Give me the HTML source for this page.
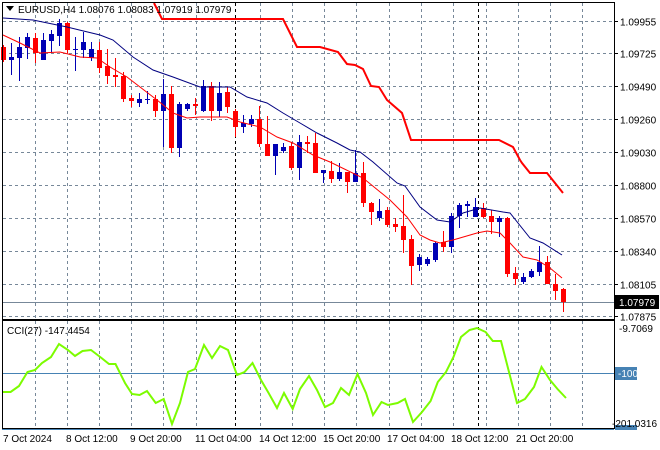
<!DOCTYPE html><html><head><meta charset="utf-8"><style>
body{margin:0;background:#fff;width:660px;height:450px;overflow:hidden}
svg{display:block;font-family:"Liberation Sans",sans-serif;font-size:10px}
</style></head><body>
<svg id="s" width="660" height="450" xmlns="http://www.w3.org/2000/svg">
<rect width="660" height="450" fill="#fff"/>
<g id="grid" stroke="#778899" stroke-width="1" stroke-dasharray="3,3"></g>
<g stroke="#000" stroke-dasharray="3,3"><line x1="235.5" y1="3" x2="235.5" y2="319"/><line x1="478.5" y1="3" x2="478.5" y2="319"/><line x1="235.5" y1="321" x2="235.5" y2="428"/><line x1="478.5" y1="321" x2="478.5" y2="428"/></g>
<line x1="3" y1="302.5" x2="614" y2="302.5" stroke="#778899"/>
<line x1="3" y1="373.5" x2="614" y2="373.5" stroke="#4682b4"/>
<g id="c"></g>
<polyline fill="none" stroke="#ff0000" stroke-width="2" points="154,3 162,19 283,19 297,47 320,47 338,52 347,64 355,65 363,69 371,86 379,87 387,100 402,113 411,140 499,140 513,147 520,160 522,163 530,173 547,173 563,193"/>
<polyline fill="none" stroke="#000080" stroke-width="1" points="3,18 33,20 67,27 100,35 113,40 133,57 153,70 173,77 200,87 230,87 247,97 267,103 283,113 300,123 317,133 337,143 350,150 360,152 373,162 397,183 405,186 420,207 437,220 450,222 463,213 480,208 503,212 510,213 530,238 543,243 562,255"/>
<polyline fill="none" stroke="#ff0000" stroke-width="1" points="3,35 20,43 40,53 60,52 80,57 97,58 110,67 127,77 140,87 157,100 173,113 187,118 200,117 227,117 240,122 260,127 277,137 293,143 313,155 330,162 363,178 390,200 407,217 420,235 430,240 440,243 453,240 477,233 487,231 500,233 510,243 523,257 537,260 550,268 562,278"/>
<polyline fill="none" stroke="#7cfc00" stroke-width="2" points="3,392 10.6,392 19,386 27.5,372 35,370 42,363 51,357 59,344 68,350 75,356 82.5,351 91,350 101.5,358 109,364 115.5,364 125,383 132,394 139.6,395 147,391 155.7,403 163.7,399 172,424 180,403 188,372 195,369 204,345 212,358 220,346 228,350 237,375 244.5,372 252.5,363 261,380 268.6,393 277,408 284,393 292.7,409 300,389 309,376 317,390 325,407 333,403 341,388 349,395 357.5,374 366,393 373,415 381.5,402 388,405 397.6,403 405,399 413,422 422,412 430.6,401 437.8,382 446,372 453.5,357 461,337 469.5,330 477,328 485.6,332 492.8,341 501,341 509,372 517,403 525,399 534,387 541.5,367 550,380 557.5,389 566,398"/>
<rect x="2.5" y="2.5" width="612" height="317" fill="none" stroke="#000"/>
<rect x="2.5" y="320.5" width="612" height="108" fill="none" stroke="#000"/>
<line x1="2" y1="429.5" x2="614" y2="429.5" stroke="#4682b4"/>
<g id="lab" fill="#000"></g>
<rect x="615" y="295" width="44" height="14" fill="#000"/>
<text x="619" y="306" fill="#fff">1.07979</text>
<rect x="615" y="367" width="22" height="13" fill="#4682b4"/>
<text x="618" y="377" fill="#fff">-100</text>
<rect x="615" y="425" width="22" height="5" fill="#4682b4"/>
<text x="619" y="332">-9.7069</text>
<text x="612" y="427">-201.0316</text>
<path d="M6,6 L14,6 L10,11 Z" fill="#000"/>
<text x="18" y="13">EURUSD,H4  1.08076 1.08083 1.07919 1.07979</text>
<text x="7" y="334">CCI(27) -147.4454</text>
<g font-size="10"><text x="3" y="442">7 Oct 2024</text><text x="66" y="442">8 Oct 12:00</text><text x="130" y="442">9 Oct 20:00</text><text x="195" y="442">11 Oct 04:00</text><text x="259" y="442">14 Oct 12:00</text><text x="323" y="442">15 Oct 20:00</text><text x="387" y="442">17 Oct 04:00</text><text x="451" y="442">18 Oct 12:00</text><text x="516" y="442">21 Oct 20:00</text></g>
</svg>
<script>
var NS="http://www.w3.org/2000/svg";
function el(p,t,a){var e=document.createElementNS(NS,t);for(var k in a)e.setAttribute(k,a[k]);p.appendChild(e);return e;}
var g=document.getElementById('grid');
var xs=[35.5,67.5,99.5,131.5,163.5,196.5,260.5,292.5,324.5,356.5,389.5,421.5,453.5,486.5,518.5,550.5,582.5];
xs.forEach(function(x){el(g,'line',{x1:x,y1:3,x2:x,y2:319});el(g,'line',{x1:x,y1:321,x2:x,y2:428});});
var ys=[21.5,53.5,86.5,119.5,152.5,185.5,218.5,251.5,284.5,316.5];
var pl=["1.09955","1.09725","1.09490","1.09260","1.09030","1.08800","1.08570","1.08340","1.08105","1.07875"];
var lab=document.getElementById('lab');
ys.forEach(function(y,i){el(g,'line',{x1:3,y1:y,x2:614,y2:y});el(lab,'line',{x1:614,y1:y,x2:618,y2:y,stroke:'#000'});if(i<9){var t=el(lab,'text',{x:620,y:y+4});t.textContent=pl[i];}else{var t=el(lab,'text',{x:620,y:y+4});t.textContent=pl[i];}});
var d=[
['r',45,62,47,60],['b',43,75,57,60],['b',37,81,47,58],['b',33,59,37,48],['r',33,63,38,53],['b',33,60,40,60],['b',30,53,34,41],['b',19,46,23,36],['r',22,53,23,50],['b',37,71,49,50],
['b',32,58,42,50],['b',42,61,49,58],['r',42,73,50,68],['r',49,84,66,76],['r',58,87,75,77],['r',72,102,76,99],['r',95,107,98,101],['b',93,107,99,103],['b',91,104,99,100],['r',95,117,99,111],
['b',79,147,94,111],['r',86,153,94,148],['b',102,157,104,148],['b',103,111,104,109],['r',98,115,104,106],['b',80,112,86,111],['r',82,121,86,111],['b',82,117,93,111],['r',87,113,92,107],['r',109,137,111,127],
['b',115,133,123,127],['b',115,127,119,124],['r',106,147,119,144],['r',116,156,144,156],['b',144,175,144,156],['b',143,153,147,151],['r',142,170,146,168],['b',135,180,142,168],['r',136,153,142,144],['r',133,173,143,173],
['b',170,183,170,173],['r',161,183,171,179],['b',163,181,172,179],['r',172,193,172,182],['b',150,182,173,182],['r',162,207,173,203],['r',202,225,203,212],['b',199,221,211,218],['r',207,227,210,225],['r',218,232,224,227],
['r',195,253,226,240],['r',235,285,239,266],['b',254,271,257,265],['b',257,266,259,264],['b',242,262,243,260],['r',231,252,242,247],['b',213,253,216,247],['b',203,228,205,216],['b',201,217,204,206],['b',198,217,207,217],
['r',203,218,208,217],['r',210,234,216,222],['b',216,237,218,222],['r',217,277,218,274],['r',267,285,273,279],['b',273,284,277,282],['b',269,278,271,277],['b',246,276,262,272],['r',256,284,262,284],['r',274,300,284,291],['r',288,312,289,302]];
var c=document.getElementById('c');
d.forEach(function(a,i){var x=Math.round(3.3+i*7.99);var col=a[0]=='r'?'#ff0000':'#0000b4';
el(c,'rect',{x:x,y:a[1],width:1,height:a[2]-a[1],fill:col});
var h=Math.max(1,a[4]-a[3]);el(c,'rect',{x:x-2,y:a[3],width:5,height:h,fill:col});});
</script>
</body></html>
